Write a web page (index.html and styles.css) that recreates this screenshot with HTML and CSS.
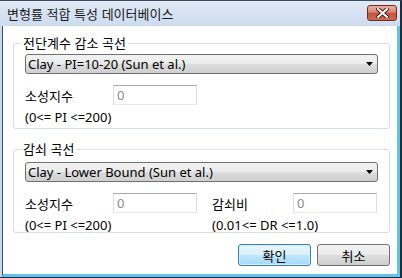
FILE: index.html
```html
<!DOCTYPE html>
<html lang="ko">
<head>
    <meta charset="UTF-8">
    <meta name="viewport" content="width=device-width, initial-scale=1.0">
    <title>변형률 적합 특성 데이터베이스</title>
    <link rel="stylesheet" href="styles.css">
</head>
<body>
    <div class="window">
        <div class="titlebar">
            <span class="title">변형률 적합 특성 데이터베이스</span>
            <button class="close-btn" aria-label="닫기">
                <svg width="13" height="10" viewBox="0 0 13 10">
                    <path d="M2 1 L11 9 M11 1 L2 9" stroke="#4a2018" stroke-width="4" stroke-linecap="square"/>
                    <path d="M2 1 L11 9 M11 1 L2 9" stroke="#fff" stroke-width="2" stroke-linecap="square"/>
                </svg>
            </button>
        </div>
        <div class="client">
            <fieldset class="group">
                <legend>전단계수 감소 곡선</legend>
                <div class="combo">
                    <span>Clay - PI=10-20 (Sun et al.)</span>
                    <svg class="combo-arrow" width="7" height="4" viewBox="0 0 7 4"><path d="M0 0 H7 L3.5 4 Z" fill="#000"/></svg>
                </div>
                <div class="fields">
                    <div class="field">
                        <div class="field-line">
                            <label for="pi1">소성지수</label>
                            <input type="text" id="pi1" value="0">
                        </div>
                        <div class="hint">(0&lt;= PI &lt;=200)</div>
                    </div>
                </div>
            </fieldset>

            <fieldset class="group group-damping">
                <legend>감쇠 곡선</legend>
                <div class="combo">
                    <span>Clay - Lower Bound (Sun et al.)</span>
                    <svg class="combo-arrow" width="7" height="4" viewBox="0 0 7 4"><path d="M0 0 H7 L3.5 4 Z" fill="#000"/></svg>
                </div>
                <div class="fields">
                    <div class="field">
                        <div class="field-line">
                            <label for="pi2">소성지수</label>
                            <input type="text" id="pi2" value="0">
                        </div>
                        <div class="hint">(0&lt;= PI &lt;=200)</div>
                    </div>
                    <div class="field field-dr">
                        <div class="field-line">
                            <label for="dr">감쇠비</label>
                            <input type="text" id="dr" value="0">
                        </div>
                        <div class="hint">(0.01&lt;= DR &lt;=1.0)</div>
                    </div>
                </div>
            </fieldset>

            <div class="actions">
                <button class="btn btn-default">확인</button>
                <button class="btn">취소</button>
            </div>
        </div>
    </div>
</body>
</html>
```

FILE: styles.css
```css
body {
    margin: 0;
    width: 402px;
    height: 278px;
    overflow: hidden;
    font-family: "Noto Sans", "Noto Sans CJK KR", sans-serif;
    font-size: 13px;
    color: #000;
}
.window {
    width: 402px;
    height: 278px;
    box-sizing: border-box;
    display: flex;
    flex-direction: column;
    background: linear-gradient(#e1eaf5, #c8d9ee 30px);
    border-top: 1px solid #3b4d63;
    border-right: 2px solid #1d2c40;
    border-bottom: 1px solid #1d2c40;
}
.titlebar {
    height: 25px;
    display: flex;
    align-items: center;
    justify-content: space-between;
    padding: 0 3px 0 7px;
}
.title {
    font-family: "Noto Sans CJK KR", sans-serif;
    font-size: 13px;
    color: #1a1a1a;
}
.close-btn {
    width: 30px;
    height: 16px;
    margin-top: -2px;
    padding: 0;
    border: 1px solid #70291d;
    border-radius: 3px;
    background: linear-gradient(#eab1a3, #d98470 45%, #c5503a 50%, #cf6a52);
    display: flex;
    align-items: center;
    justify-content: center;
}
.client {
    flex: 1;
    background-color: #fff;
    margin-left: 2px;
    border-left: 1px solid #34506f;
    border-right: 3px solid #5fc4ea;
    border-bottom: 3px solid #5fc4ea;
    padding: 9px 7px 0 10px;
}
.group {
    margin: 0;
    padding: 3px 11px 4px 11px;
    border: 1px solid #d5dfe5;
    border-radius: 3px;
}
.group-damping {
    margin-top: 12px;
    padding-top: 5px;
    padding-bottom: 0;
}
legend {
    margin-left: -4px;
    padding: 0 2px;
    line-height: 16px;
    font-family: "Noto Sans CJK KR", sans-serif;
}
.combo {
    height: 20px;
    box-sizing: border-box;
    display: flex;
    align-items: center;
    justify-content: space-between;
    padding: 0 4px 0 2px;
    border: 1px solid #707070;
    border-radius: 3px;
    background: linear-gradient(#f2f2f2, #ebebeb 50%, #dddddd 50%, #cfcfcf);
}
.fields {
    display: flex;
    gap: 15px;
    margin-top: 11px;
}
.field-line {
    display: flex;
    align-items: center;
}
.field-line label {
    width: 88px;
    font-family: "Noto Sans CJK KR", sans-serif;
}
.field-dr .field-line label {
    width: 81px;
}
input {
    width: 84px;
    height: 20px;
    box-sizing: border-box;
    margin: 0;
    padding: 0 3px;
    border: 1px solid #dbdfe6;
    border-top-color: #abadb3;
    border-bottom-color: #e3e9ef;
    font-family: inherit;
    font-size: 13px;
    color: #8a8a8a;
    outline: none;
}
.hint {
    margin-top: 5px;
    line-height: 14px;
}
.actions {
    display: flex;
    justify-content: flex-end;
    gap: 6px;
    margin-top: 11px;
}
.btn {
    width: 73px;
    height: 22px;
    padding: 0;
    border: 1px solid #707070;
    border-radius: 3px;
    background: linear-gradient(#f2f2f2, #ebebeb 50%, #dddddd 50%, #cfcfcf);
    font-family: "Noto Sans CJK KR", sans-serif;
    font-size: 13px;
    color: #000;
}
.btn-default {
    border-color: #3c7fb1;
    background: linear-gradient(#eaf6fd, #d9f0fc 50%, #bee6fd 50%, #a7d9f5);
    box-shadow: inset 0 0 0 1px #cfeeff;
}
```
